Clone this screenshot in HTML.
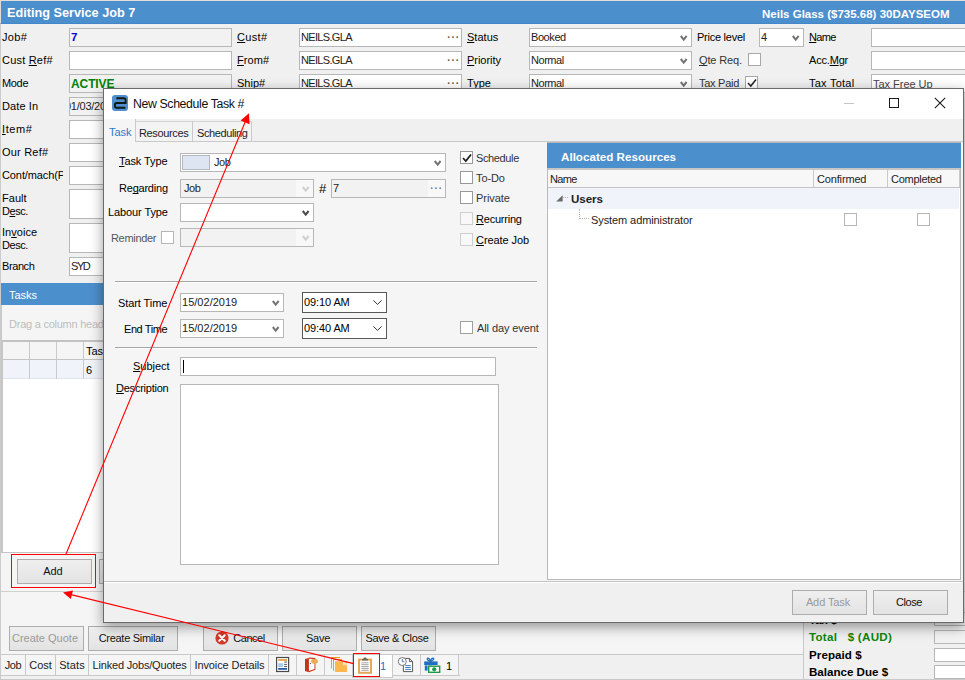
<!DOCTYPE html>
<html lang="en">
<head>
<meta charset="utf-8">
<title>Editing Service Job 7</title>
<style>
html,body{margin:0;padding:0;}
body{width:965px;height:680px;position:relative;overflow:hidden;background:#f0f0f0;
 font-family:"Liberation Sans",sans-serif;font-size:11px;color:#000;line-height:13px;}
*{box-sizing:border-box;}
.a{position:absolute;white-space:nowrap;}
.t{position:absolute;white-space:nowrap;height:13px;line-height:13px;letter-spacing:-0.1px;}
.b{font-weight:bold;}
u{text-decoration:underline;text-underline-offset:1px;text-decoration-skip-ink:none;}
.in{position:absolute;height:19px;border:1px solid #b7b7b7;background:#fff;padding:0 0 0 1px;line-height:17px;white-space:nowrap;overflow:hidden;letter-spacing:-0.1px;color:#222;}
.dis{background:#f2f2f2;}
.cb{position:absolute;width:13px;height:13px;border:1px solid #989898;background:#fff;}
.cb.l{border-color:#cfcfcf;background:#f8f8f8;}
.btn{position:absolute;height:25px;border:1px solid #adadad;background:linear-gradient(#efefef,#e3e3e3);text-align:center;line-height:23px;white-space:nowrap;padding-right:3px;letter-spacing:-0.1px;color:#111;}
.btn.off{color:#9a9a9a;}
.dots{position:absolute;right:1px;top:0;font-size:10px;letter-spacing:0.9px;color:#555;font-weight:bold;}
.chev{position:absolute;width:8px;height:7px;}
.tab{position:absolute;height:20px;line-height:20px;text-align:center;border-right:1px solid #c9c9c9;letter-spacing:-0.1px;color:#222;}
</style>
</head>
<body>
<!-- ===== background window: Editing Service Job 7 ===== -->
<div id="bg" class="a" style="left:0;top:0;width:965px;height:680px;background:#f0f0f0;">
 <div class="a" style="left:0;top:0;width:965px;height:24px;background:#4c8fcd;border-top:1px solid #e2dfdb;border-left:1px solid #e0dcd8;border-bottom:1px solid #4585c9;"></div>
 <div class="t b" style="left:7px;top:5px;font-size:12.7px;height:16px;line-height:16px;color:#fff;letter-spacing:0;">Editing Service Job 7</div>
 <div class="t b" style="left:762px;top:8px;font-size:11.5px;color:#fff;letter-spacing:0;">Neils Glass ($735.68) 30DAYSEOM</div>
</div>
<!-- top form, column 1 -->
<div class="t" style="left:2px;top:31px;letter-spacing:0.36px;">Job#</div>
<div class="in dis b" style="left:69px;top:28px;width:163px;color:#0000d8;font-size:11.5px;">7</div>
<div class="t" style="left:2px;top:54px;letter-spacing:0.2px;">Cust <u>R</u>ef#</div>
<div class="in" style="left:69px;top:51px;width:163px;"></div>
<div class="t" style="left:2px;top:77px;letter-spacing:-0.33px;">Mode</div>
<div class="in dis b" style="left:69px;top:74px;width:163px;color:#008000;font-size:12px;line-height:18px;">ACTIVE</div>
<div class="t" style="left:2px;top:100px;letter-spacing:0.1px;">Date In</div>
<div class="in dis" style="left:69px;top:97px;width:60px;padding-left:0;"><span style="margin-left:-5px;letter-spacing:-0.25px;">01/03/2019</span></div>
<div class="t" style="left:2px;top:123px;letter-spacing:0.57px;"><u>I</u>tem#</div>
<div class="in" style="left:69px;top:120px;width:60px;"></div>
<div class="t" style="left:2px;top:146px;letter-spacing:0.2px;">Our Ref#</div>
<div class="in" style="left:69px;top:143px;width:60px;"></div>
<div class="t" style="left:2px;top:169px;width:61px;overflow:hidden;">Cont/mach(Ph</div>
<div class="in" style="left:69px;top:166px;width:60px;"></div>
<div class="t" style="left:2px;top:192px;letter-spacing:0.03px;">Fault</div>
<div class="t" style="left:2px;top:205px;letter-spacing:-0.43px;">D<u>e</u>sc.</div>
<div class="in" style="left:69px;top:189px;width:60px;height:30px;"></div>
<div class="t" style="left:2px;top:226px;letter-spacing:0.03px;">In<u>v</u>oice</div>
<div class="t" style="left:2px;top:239px;letter-spacing:-0.43px;">Desc.</div>
<div class="in" style="left:69px;top:223px;width:60px;height:30px;"></div>
<div class="t" style="left:2px;top:260px;letter-spacing:-0.41px;">Branch</div>
<div class="in" style="left:69px;top:257px;width:60px;letter-spacing:-1.41px;">SYD</div>
<!-- column 2 -->
<div class="t" style="left:237px;top:31px;letter-spacing:0.32px;"><u>C</u>ust#</div>
<div class="in" style="left:299px;top:28px;width:163px;letter-spacing:-0.67px;">NEILS.GLA<span class="dots">···</span></div>
<div class="t" style="left:237px;top:54px;letter-spacing:0.09px;"><u>F</u>rom#</div>
<div class="in" style="left:299px;top:51px;width:163px;letter-spacing:-0.67px;">NEILS.GLA<span class="dots">···</span></div>
<div class="t" style="left:237px;top:77px;letter-spacing:0.01px;"><u>S</u>hip#</div>
<div class="in" style="left:299px;top:74px;width:163px;letter-spacing:-0.67px;">NEILS.GLA<span class="dots">···</span></div>
<!-- column 3 -->
<div class="t" style="left:467px;top:31px;letter-spacing:0.02px;"><u>S</u>tatus</div>
<div class="in" style="left:529px;top:28px;width:163px;letter-spacing:-0.42px;">Booked<svg class="chev" style="right:3px;top:6px" viewBox="0 0 8 7"><path d="M0.8 1 L3.7 4.6 L6.6 1" fill="none" stroke="#747474" stroke-width="2"/></svg></div>
<div class="t" style="left:467px;top:54px;letter-spacing:-0.03px;"><u>P</u>riority</div>
<div class="in" style="left:529px;top:51px;width:163px;letter-spacing:-0.45px;">Normal<svg class="chev" style="right:3px;top:6px" viewBox="0 0 8 7"><path d="M0.8 1 L3.7 4.6 L6.6 1" fill="none" stroke="#747474" stroke-width="2"/></svg></div>
<div class="t" style="left:467px;top:77px;letter-spacing:0.01px;"><u>T</u>ype</div>
<div class="in" style="left:529px;top:74px;width:163px;letter-spacing:-0.45px;">Normal<svg class="chev" style="right:3px;top:6px" viewBox="0 0 8 7"><path d="M0.8 1 L3.7 4.6 L6.6 1" fill="none" stroke="#747474" stroke-width="2"/></svg></div>
<!-- column 4 -->
<div class="t" style="left:697px;top:31px;letter-spacing:-0.25px;">Price level</div>
<div class="in" style="left:759px;top:28px;width:45px;">4<svg class="chev" style="right:3px;top:6px" viewBox="0 0 8 7"><path d="M0.8 1 L3.7 4.6 L6.6 1" fill="none" stroke="#747474" stroke-width="2"/></svg></div>
<div class="t" style="left:699px;top:54px;color:#333;letter-spacing:-0.13px;"><u>Q</u>te Req.</div>
<div class="cb" style="left:748px;top:53px;border-color:#a8a8a8;"></div>
<div class="t" style="left:699px;top:77px;color:#333;letter-spacing:-0.28px;">Ta<u>x</u> Paid</div>
<div class="cb" style="left:745px;top:76px;border-color:#a8a8a8;"><svg class="a" style="left:1px;top:1px" width="10" height="10" viewBox="0 0 10 10"><path d="M1 5 L3.8 8 L9 1.5" fill="none" stroke="#222" stroke-width="1.5"/></svg></div>
<!-- column 5 -->
<div class="t" style="left:809px;top:31px;letter-spacing:-0.64px;"><u>N</u>ame</div>
<div class="in" style="left:871px;top:28px;width:100px;"></div>
<div class="t" style="left:809px;top:54px;letter-spacing:-0.19px;">Acc.<u>M</u>gr</div>
<div class="in" style="left:871px;top:51px;width:100px;"></div>
<div class="t" style="left:809px;top:77px;letter-spacing:0.24px;">Tax Total</div>
<div class="in" style="left:871px;top:74px;width:100px;line-height:19px;color:#444;letter-spacing:-0.03px;">Tax Free Up</div>
<!--BG-FORM-END-->
<!-- Tasks section -->
<div class="a" style="left:0;top:24px;width:1px;height:656px;background:#cbcbcb;"></div>
<div class="a" style="left:1px;top:283px;width:700px;height:22px;background:#4c8fcd;"></div>
<div class="t" style="left:9px;top:289px;font-size:11px;color:#fff;letter-spacing:-0.03px;">Tasks</div>
<div class="a" style="left:1px;top:305px;width:700px;height:36px;background:#f5f5f5;border-left:1px solid #c9c9c9;"></div>
<div class="t" style="left:9px;top:318px;font-size:11px;color:#bdbdbd;letter-spacing:-0.24px;">Drag a column header here</div>
<div class="a" style="left:1px;top:340px;width:700px;height:213px;background:#fff;border-left:2px solid #c6c6c6;border-top:2px solid #c3c3c3;border-bottom:1px solid #c3c3c3;"></div>
<div class="a" style="left:3px;top:342px;width:700px;height:18px;background:#f5f5f5;border-bottom:1px solid #c3c3c3;"></div>
<div class="a" style="left:3px;top:360px;width:700px;height:19px;background:#f0f4fa;border-bottom:1px solid #dfe3ea;"></div>
<div class="a" style="left:29px;top:342px;width:1px;height:37px;background:#c9c9c9;"></div>
<div class="a" style="left:56px;top:342px;width:1px;height:37px;background:#c9c9c9;"></div>
<div class="a" style="left:83px;top:342px;width:1px;height:37px;background:#c9c9c9;"></div>
<div class="t" style="left:86px;top:345px;letter-spacing:-0.01px;">Task</div>
<div class="t" style="left:86px;top:364px;">6</div>
<!-- Add button row -->
<div class="a" style="left:1px;top:553px;width:700px;height:38px;background:#f5f5f5;"></div>
<div class="btn" style="left:17px;top:559px;width:75px;">Add</div>
<div class="btn" style="left:99px;top:559px;width:75px;">Edit</div>
<div class="a" style="left:11px;top:554px;width:85px;height:34px;border:1px solid #ff0000;"></div>
<div class="a" style="left:1px;top:591px;width:964px;height:1px;background:#d0d0d0;"></div>
<div class="a" style="left:1px;top:592px;width:803px;height:62px;background:#f5f5f5;"></div>
<!--BG-TASKS-END-->
<!-- bottom buttons -->
<div class="btn off" style="left:9px;top:626px;width:75px;letter-spacing:-0.0px;">Create Quote</div>
<div class="btn" style="left:88px;top:626px;width:90px;letter-spacing:-0.29px;">Create Similar</div>
<div class="btn" style="left:203px;top:626px;width:75px;padding-left:20px;letter-spacing:-0.48px;">Cancel</div>
<svg class="a" style="left:215px;top:631px" width="14" height="14" viewBox="0 0 14 14"><circle cx="7" cy="7" r="6.6" fill="#d23a2a"/><path d="M4.3 4.3 L9.7 9.7 M9.7 4.3 L4.3 9.7" stroke="#fff" stroke-width="2.1" stroke-linecap="round"/></svg>
<div class="btn" style="left:282px;top:626px;width:75px;letter-spacing:-0.25px;">Save</div>
<div class="btn" style="left:361px;top:626px;width:75px;letter-spacing:-0.31px;">Save &amp; Close</div>
<!-- bottom tab strip -->
<div class="a" style="left:1px;top:654px;width:803px;height:1px;background:#c9c9c9;"></div>
<div class="a" style="left:1px;top:655px;width:458px;height:21px;background:#f5f5f5;"></div>
<div class="a" style="left:1px;top:675px;width:459px;height:1px;background:#c9c9c9;"></div>

<div class="tab" style="left:1px;top:655px;width:25px;letter-spacing:-0.46px;">Job</div>
<div class="tab" style="left:26px;top:655px;width:30px;letter-spacing:-0.01px;">Cost</div>
<div class="tab" style="left:56px;top:655px;width:33px;letter-spacing:0.12px;">Stats</div>
<div class="tab" style="left:89px;top:655px;width:102px;letter-spacing:-0.18px;">Linked Jobs/Quotes</div>
<div class="tab" style="left:191px;top:655px;width:78px;">Invoice Details</div>
<div class="tab" style="left:269px;top:655px;width:28px;"></div>
<div class="tab" style="left:297px;top:655px;width:28px;"></div>
<div class="tab" style="left:325px;top:655px;width:28px;"></div>
<div class="a" style="left:352px;top:654px;width:41px;height:24px;background:#fff;border:1px solid #c9c9c9;"></div>
<div class="t" style="left:380px;top:660px;color:#1a6fc9;">1</div>
<div class="tab" style="left:393px;top:655px;width:28px;"></div>
<div class="tab" style="left:421px;top:655px;width:38px;"></div>
<div class="t" style="left:446px;top:660px;">1</div>
<!-- tab icons -->
<svg class="a" style="left:275px;top:656px" width="16" height="17" viewBox="0 0 16 17"><rect x="1.6" y="1.5" width="12" height="14" fill="#fff" stroke="#4a4a4a" stroke-width="1.2"/><rect x="3.2" y="3" width="8.8" height="1.9" fill="#e8a84c"/><rect x="3.2" y="7.2" width="5" height="3.8" fill="#a4d0ef"/><rect x="9.2" y="5.6" width="2.8" height="0.9" fill="#444"/><rect x="9.2" y="7.9" width="2.8" height="0.9" fill="#444"/><rect x="9.2" y="10.1" width="2.8" height="0.9" fill="#444"/><rect x="3.2" y="12" width="8.8" height="1.8" fill="#1f5fae"/></svg>
<svg class="a" style="left:303px;top:656px" width="17" height="17" viewBox="0 0 17 17"><path d="M5.9 2.8 L11.8 3 L11.8 13.4 L5.9 15.2 Z" fill="#fff"/><path d="M2 3 L5.9 1.9 L5.9 16.2 L2 14.9 Z" fill="#c43416"/><path d="M5.9 1.6 L12.4 2 L12.4 13.8 L5.9 16.2 L5.9 15 L11.5 13 L11.5 3 L5.9 2.8 Z" fill="#c43416"/><rect x="8.1" y="3" width="6.8" height="4.7" rx="2.1" fill="#e9ad55"/><rect x="6.9" y="7" width="1" height="1.1" fill="#445"/></svg>
<svg class="a" style="left:330px;top:656px" width="19" height="17" viewBox="0 0 19 17"><path d="M1.5 12.6 V1.5 H10 M3.5 14.8 V3.4 H12" stroke="#e8a030" stroke-width="1" fill="none"/><path d="M5 5.2 H13 L17 9.2 V16 H5 Z" fill="#fbb84e"/><path d="M13 5.2 L17 9.2 H13 Z" fill="#fde3b4"/><path d="M14 5.2 L17 5.2 L17 8.2 Z" fill="#fbb84e"/></svg>
<svg class="a" style="left:357px;top:656px" width="16" height="18" viewBox="0 0 16 18"><rect x="2" y="3.6" width="12" height="13.2" fill="#fff" stroke="#e2a95a" stroke-width="2"/><path d="M5 4.4 V3 H6.2 L6.9 1.4 H9.1 L9.8 3 H11 V4.4 Z" fill="#6a6a6a"/><path d="M4.4 6.8 H11.6 M4.4 8.7 H11.6 M4.4 10.6 H11.6 M4.4 12.4 H11.6 M4.4 14.3 H11.6" stroke="#8a8a8a" stroke-width="0.8"/></svg>
<svg class="a" style="left:397px;top:656px" width="17" height="17" viewBox="0 0 17 17"><path d="M6.4 2.4 H12.4 L15.6 5.6 V15.6 H6.4 Z" fill="#fff" stroke="#5a5a5a" stroke-width="1"/><path d="M12.4 2.4 V5.6 H15.6" fill="none" stroke="#5a5a5a" stroke-width="1"/><path d="M8.2 9.6 H13.8 M8.2 11.5 H13.8 M8.2 13.4 H13.8" stroke="#2b6fc2" stroke-width="0.9"/><circle cx="5.3" cy="5.5" r="4" fill="#fff" stroke="#666" stroke-width="0.9"/><path d="M5.3 3 V5.7 H7.4" fill="none" stroke="#2b6fc2" stroke-width="0.9"/></svg>
<svg class="a" style="left:423px;top:655px" width="19" height="19" viewBox="0 0 19 19"><g transform="translate(0,1.4)"><path d="M4.4 2 Q6 1.2 7.4 4.2 Q8.8 1.2 10.6 2 Q11.4 3.4 7.6 5 Q3.4 3.6 4.4 2 Z" fill="none" stroke="#1f6fc4" stroke-width="1.3"/><rect x="1.2" y="5" width="13.4" height="3.6" fill="#1f6fc4"/><rect x="6.4" y="4" width="2.2" height="5" fill="#1f6fc4"/></g><rect x="1.8" y="10.4" width="2.8" height="5.2" fill="#1f6fc4"/><rect x="5" y="10.5" width="12.4" height="7.5" fill="#1a9b4a"/><rect x="6.4" y="11.9" width="9.6" height="4.7" fill="#fff"/><circle cx="11.2" cy="14.3" r="2.1" fill="#1a9b4a"/></svg>
<!--ICONS-END-->
<div class="a" style="left:353px;top:653px;width:27px;height:24px;border:1px solid #ff0000;"></div>
<!-- totals (right bottom) -->
<div class="a" style="left:803px;top:592px;width:1px;height:88px;background:#c9c9c9;"></div>
<div class="t b" style="left:809px;top:613px;font-size:11.6px;letter-spacing:-0.15px;">Tax $</div>
<div class="in dis" style="left:934px;top:612px;width:40px;height:14px;"></div>
<div class="t b" style="left:809px;top:630px;font-size:11.6px;color:#0c860c;letter-spacing:0.27px;">Total&nbsp;&nbsp; $ (AUD)</div>
<div class="in dis" style="left:934px;top:630px;width:40px;height:14px;"></div>
<div class="t b" style="left:809px;top:648px;font-size:11.6px;letter-spacing:0.07px;">Prepaid $</div>
<div class="in" style="left:934px;top:648px;width:40px;height:14px;"></div>
<div class="t b" style="left:809px;top:665px;font-size:11.6px;letter-spacing:-0.01px;">Balance Due $</div>
<div class="in" style="left:934px;top:665px;width:40px;height:14px;"></div>
<!--BG-BOTTOM-END-->
<!-- ===== dialog: New Schedule Task # ===== -->
<div id="dlg" class="a" style="left:103px;top:88px;width:861px;height:535px;background:#f5f5f5;border:1px solid #6a6a6a;box-shadow:0 4px 12px 0 rgba(0,0,0,0.40);">
 <div class="a" style="left:0;top:0;width:859px;height:30px;background:#fff;"></div>
 <div class="a" style="left:0;top:30px;width:859px;height:23px;background:#f0f0f0;border-bottom:1px solid #c9c9c9;"></div>
 <div class="a" style="left:0;top:492px;width:859px;height:41px;background:#f0f0f0;border-top:1px solid #c2c2c2;box-shadow:inset 0 1px 0 #fff;"></div>
</div>
<!-- title bar -->
<svg class="a" style="left:112px;top:95px" width="16" height="16" viewBox="0 0 16 16"><rect x="0" y="0" width="16" height="16" rx="3" fill="#4f8fcf"/><path d="M4.4 3.3 H11.8 Q13.6 3.3 13.6 5 V8 H4.6 Q2.9 8 2.9 9.7 V11 Q2.9 12.8 4.7 12.8 H13.4" fill="none" stroke="#0d1a12" stroke-width="1.9"/></svg>
<div class="t" style="left:133px;top:96px;font-size:12.3px;height:16px;line-height:16px;color:#111;letter-spacing:-0.37px;">New Schedule Task #</div>
<div class="a" style="left:844px;top:103px;width:10px;height:1px;background:#c4c4c4;"></div>
<div class="a" style="left:889px;top:98px;width:10px;height:10px;border:1px solid #1a1a1a;"></div>
<svg class="a" style="left:934px;top:97px" width="12" height="12" viewBox="0 0 12 12"><path d="M0.8 0.8 L11.2 11.2 M11.2 0.8 L0.8 11.2" stroke="#1a1a1a" stroke-width="1.1"/></svg>
<!-- dialog tabs -->
<div class="a" style="left:104px;top:119px;width:32px;height:23px;background:#f5f5f5;border-right:1px solid #c9c9c9;"></div>
<div class="a" style="left:136px;top:121px;width:57px;height:21px;background:#f3f3f3;border-top:1px solid #d4d4d4;border-right:1px solid #c9c9c9;border-bottom:1px solid #c9c9c9;"></div>
<div class="a" style="left:193px;top:121px;width:59px;height:21px;background:#f3f3f3;border-top:1px solid #d4d4d4;border-right:1px solid #c9c9c9;border-bottom:1px solid #c9c9c9;"></div>
<div class="t" style="left:109px;top:126px;color:#2a7ac8;letter-spacing:-0.01px;">Task</div>
<div class="t" style="left:139px;top:127px;color:#222;letter-spacing:-0.35px;">Resources</div>
<div class="t" style="left:197px;top:127px;color:#222;letter-spacing:-0.4px;">Scheduling</div>
<!-- dialog left form -->
<div class="t" style="left:119px;top:155px;letter-spacing:-0.1px;"><u>T</u>ask Type</div>
<div class="in" style="left:180px;top:153px;width:266px;padding-left:33px;letter-spacing:-0.46px;">Job<span class="a" style="left:1px;top:1px;width:28px;height:15px;background:#dde5f2;border:1px solid #b4b8c0;"></span><svg class="chev" style="right:3px;top:6px" viewBox="0 0 8 7"><path d="M0.8 1 L3.7 4.6 L6.6 1" fill="none" stroke="#747474" stroke-width="2"/></svg></div>
<div class="t" style="left:119px;top:182px;letter-spacing:-0.22px;">Re<u>g</u>arding</div>
<div class="in dis" style="left:180px;top:179px;width:134px;padding-left:3px;letter-spacing:-0.46px;">Job<span class="a" style="right:0;top:0;width:17px;height:17px;background:#f8f8f8;"></span><svg class="chev" style="right:3px;top:6px" viewBox="0 0 8 7"><path d="M0.8 1 L3.7 4.6 L6.6 1" fill="none" stroke="#d0d0d0" stroke-width="2"/></svg></div>
<div class="t" style="left:319px;top:182px;font-size:13px;">#</div>
<div class="in dis" style="left:331px;top:179px;width:115px;">7<span class="a" style="right:0;top:0;width:17px;height:17px;background:#f8f8f8;"></span><span class="dots" style="color:#777;right:2px;">···</span></div>
<div class="t" style="left:108px;top:206px;letter-spacing:-0.1px;">Labour Type</div>
<div class="in" style="left:180px;top:203px;width:134px;"><svg class="chev" style="right:3px;top:6px" viewBox="0 0 8 7"><path d="M0.8 1 L3.7 4.6 L6.6 1" fill="none" stroke="#4a4a4a" stroke-width="2"/></svg></div>
<div class="t" style="left:111px;top:232px;color:#555;letter-spacing:-0.32px;">Reminder</div>
<div class="cb" style="left:161px;top:231px;border-color:#b5b5b5;"></div>
<div class="in dis" style="left:180px;top:228px;width:134px;"><span class="a" style="right:0;top:0;width:17px;height:17px;background:#f8f8f8;"></span><svg class="chev" style="right:3px;top:6px" viewBox="0 0 8 7"><path d="M0.8 1 L3.7 4.6 L6.6 1" fill="none" stroke="#d0d0d0" stroke-width="2"/></svg></div>
<div class="a" style="left:115px;top:281px;width:422px;height:2px;background:#a6a6a6;border-bottom:1px solid #fff;"></div>
<div class="t" style="left:118px;top:297px;letter-spacing:-0.08px;">Start Time</div>
<div class="in" style="left:180px;top:293px;width:104px;letter-spacing:0.02px;">15/02/2019<svg class="chev" style="right:3px;top:6px" viewBox="0 0 8 7"><path d="M0.8 1 L3.7 4.6 L6.6 1" fill="none" stroke="#747474" stroke-width="2"/></svg></div>
<div class="in" style="left:302px;top:292px;width:85px;height:21px;border-color:#585858;line-height:19px;color:#000;">09:10 AM<svg class="chev" style="right:4px;top:7px;width:9px;height:5px" viewBox="0 0 9 5"><path d="M0.4 0.4 L4.5 4.4 L8.6 0.4" fill="none" stroke="#333" stroke-width="1"/></svg></div>
<div class="t" style="left:124px;top:323px;letter-spacing:-0.42px;">End Time</div>
<div class="in" style="left:180px;top:319px;width:104px;letter-spacing:0.02px;">15/02/2019<svg class="chev" style="right:3px;top:6px" viewBox="0 0 8 7"><path d="M0.8 1 L3.7 4.6 L6.6 1" fill="none" stroke="#747474" stroke-width="2"/></svg></div>
<div class="in" style="left:302px;top:318px;width:85px;height:21px;border-color:#585858;line-height:19px;color:#000;">09:40 AM<svg class="chev" style="right:4px;top:7px;width:9px;height:5px" viewBox="0 0 9 5"><path d="M0.4 0.4 L4.5 4.4 L8.6 0.4" fill="none" stroke="#333" stroke-width="1"/></svg></div>
<div class="cb" style="left:460px;top:321px;border-color:#a0a0a0;"></div>
<div class="t" style="left:477px;top:322px;color:#333;">All day event</div>
<div class="a" style="left:115px;top:347px;width:422px;height:2px;background:#a6a6a6;border-bottom:1px solid #fff;"></div>
<div class="t" style="left:133px;top:360px;letter-spacing:-0.01px;"><u>S</u>ubject</div>
<div class="in" style="left:180px;top:357px;width:316px;"><span class="a" style="left:2px;top:2px;width:1px;height:13px;background:#000;"></span></div>
<div class="t" style="left:116px;top:382px;letter-spacing:-0.23px;"><u>D</u>escription</div>
<div class="in" style="left:180px;top:384px;width:319px;height:181px;"></div>
<!-- dialog checkboxes -->
<div class="cb" style="left:460px;top:151px;"><svg class="a" style="left:1px;top:1px" width="10" height="10" viewBox="0 0 10 10"><path d="M1 5 L3.8 8 L9 1.5" fill="none" stroke="#222" stroke-width="1.8"/></svg></div>
<div class="t" style="left:476px;top:152px;color:#333;letter-spacing:-0.37px;">Schedule</div>
<div class="cb" style="left:460px;top:171px;"></div>
<div class="t" style="left:476px;top:172px;color:#333;letter-spacing:-0.11px;">To-Do</div>
<div class="cb" style="left:460px;top:191px;"></div>
<div class="t" style="left:476px;top:192px;color:#333;letter-spacing:-0.06px;">Private</div>
<div class="cb l" style="left:460px;top:212px;"></div>
<div class="t" style="left:476px;top:213px;letter-spacing:-0.22px;"><u>R</u>ecurring</div>
<div class="cb l" style="left:460px;top:233px;"></div>
<div class="t" style="left:476px;top:234px;letter-spacing:-0.08px;"><u>C</u>reate Job</div>
<!--DLG-LEFT-END-->
<!-- Allocated Resources panel -->
<div class="a" style="left:547px;top:142px;width:414px;height:438px;background:#fff;border:1px solid #b9b9b9;"></div>
<div class="a" style="left:547px;top:143px;width:414px;height:25px;background:#4c8fcd;"></div>
<div class="t b" style="left:561px;top:150px;font-size:11.6px;color:#fff;letter-spacing:0.02px;">Allocated Resources</div>
<div class="a" style="left:548px;top:168px;width:412px;height:20px;background:#f7f7f7;border-top:2px solid #c6c6c6;border-bottom:1px solid #c3c3c3;"></div>
<div class="a" style="left:813px;top:170px;width:1px;height:17px;background:#c9c9c9;"></div>
<div class="a" style="left:887px;top:170px;width:1px;height:17px;background:#c9c9c9;"></div>
<div class="a" style="left:959px;top:170px;width:1px;height:17px;background:#c9c9c9;"></div>
<div class="t" style="left:550px;top:173px;color:#222;letter-spacing:-0.64px;">Name</div>
<div class="t" style="left:817px;top:173px;color:#222;letter-spacing:-0.16px;">Confirmed</div>
<div class="t" style="left:891px;top:173px;color:#222;letter-spacing:-0.28px;">Completed</div>
<div class="a" style="left:548px;top:188px;width:411px;height:21px;background:#f0f4fa;"></div>
<svg class="a" style="left:556px;top:195px" width="8" height="7" viewBox="0 0 8 7"><path d="M0.2 6.6 L6.6 6.6 L6.6 0.2 Z" fill="#6a6a6a"/></svg>
<div class="a" style="left:563px;top:197px;width:5px;height:1px;border-top:1px dotted #b4b4b4;"></div>
<div class="t b" style="left:571px;top:192px;font-size:11.6px;color:#222;letter-spacing:-0.09px;">Users</div>
<div class="a" style="left:579px;top:209px;width:10px;height:10px;border-left:1px dotted #b4b4b4;border-bottom:1px dotted #b4b4b4;"></div>
<div class="t" style="left:591px;top:214px;color:#222;letter-spacing:-0.09px;">System administrator</div>
<div class="cb" style="left:844px;top:213px;border-color:#b5b5b5;"></div>
<div class="cb" style="left:917px;top:213px;border-color:#b5b5b5;"></div>
<!--DLG-RIGHT-END-->
<!-- dialog buttons -->
<div class="btn off" style="left:792px;top:590px;width:75px;">Add Task</div>
<div class="btn" style="left:873px;top:590px;width:75px;letter-spacing:-0.45px;">Close</div>
<!--DIALOG-END-->
<div class="a" style="left:0;top:679px;width:965px;height:1px;background:#c9c9c9;"></div>
<!-- red annotation arrows -->
<svg class="a" style="left:0;top:0;pointer-events:none" width="965" height="680" viewBox="0 0 965 680">
 <line x1="66" y1="554" x2="246" y2="120" stroke="#ff0000" stroke-width="1.1"/>
 <path d="M249 113.3 L240.6 120.6 L249.6 124.2 Z" fill="#ff0000"/>
 <line x1="353.5" y1="663.6" x2="71" y2="594.6" stroke="#ff0000" stroke-width="1.1"/>
 <path d="M63 592.5 L73 590.4 L70.8 599 Z" fill="#ff0000"/>
</svg>
<!--ARROWS-END-->
</body>
</html>
